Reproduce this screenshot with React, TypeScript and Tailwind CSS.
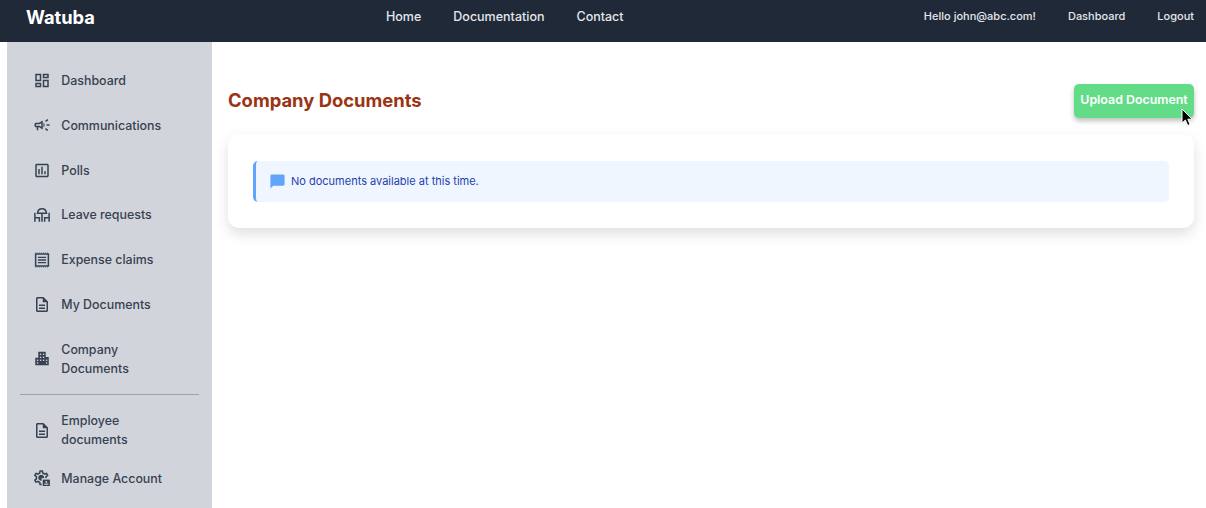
import React from "react";
import { MdOutlineDashboard, MdOutlineCampaign, MdOutlinePoll, MdOutlineDescription, MdChatBubble } from "react-icons/md";

const DeckIcon = () => (
  <svg viewBox="0 0 24 24" width="20" height="20" fill="none" stroke="currentColor" strokeWidth="2">
    <path d="M6 9.500c.3-3.600 2.800-6 6-6s5.700 2.400 6 6z" />
    <path d="M12 9.500V21" />
    <path d="M2.500 9V21M2.500 15.500H8.500V21" />
    <path d="M21.500 9V21M21.500 15.500H15.500V21" />
  </svg>
);

const ReceiptIcon = () => (
  <svg viewBox="0 0 24 24" width="20" height="20" fill="none" stroke="currentColor">
    <path d="M3 2.700h18M3 21.300h18" strokeWidth="1" strokeDasharray="1.300 1.300" />
    <rect x="3.500" y="4" width="17" height="16" strokeWidth="2" />
    <path d="M6.500 8.500h11M6.500 12h11M6.500 15.500h11" strokeWidth="1.800" />
  </svg>
);

const CompanyIcon = () => (
  <svg viewBox="0 0 24 24" width="21" height="21">
    <path d="M7 3h10v7h4v11H3V11h4z" fill="currentColor" />
    <g fill="#d1d5db">
      <rect x="9.200" y="5.500" width="1.800" height="1.800" /><rect x="13.200" y="5.500" width="1.800" height="1.800" />
      <rect x="9.200" y="9.500" width="1.800" height="1.800" /><rect x="13.200" y="9.500" width="1.800" height="1.800" />
      <rect x="5.200" y="13.500" width="1.800" height="1.800" /><rect x="9.200" y="13.500" width="1.800" height="1.800" /><rect x="13.200" y="13.500" width="1.800" height="1.800" /><rect x="17.200" y="13.500" width="1.800" height="1.800" />
      <rect x="5.200" y="17" width="1.800" height="1.800" /><rect x="17.200" y="17" width="1.800" height="1.800" />
    </g>
  </svg>
);

const GEAR = "M19.43 12.98c.04-.32.07-.64.07-.98 0-.34-.03-.66-.07-.98l2.11-1.65c.19-.15.24-.42.12-.64l-2-3.46c-.09-.16-.26-.25-.44-.25-.06 0-.12.01-.17.03l-2.49 1c-.52-.4-1.08-.73-1.69-.98l-.38-2.65C14.46 2.18 14.25 2 14 2h-4c-.25 0-.46.18-.49.42l-.38 2.65c-.61.25-1.17.59-1.69.98l-2.49-1c-.06-.02-.12-.03-.18-.03-.17 0-.34.09-.43.25l-2 3.46c-.13.22-.07.49.12.64l2.11 1.65c-.04.32-.07.65-.07.98 0 .33.03.66.07.98l-2.11 1.65c-.19.15-.24.42-.12.64l2 3.46c.09.16.26.25.44.25.06 0 .12-.01.17-.03l2.49-1c.52.4 1.08.73 1.69.98l.38 2.65c.03.24.24.42.49.42h4c.25 0 .46-.18.49-.42l.38-2.65c.61-.25 1.17-.59 1.69-.98l2.49 1c.06.02.12.03.18.03.17 0 .34-.09.43-.25l2-3.46c.12-.22.07-.49-.12-.64l-2.11-1.65zm-1.98-1.71c.04.31.05.52.05.73 0 .21-.02.43-.05.73l-.14 1.13.89.7 1.08.84-.7 1.21-1.27-.51-1.04-.42-.9.68c-.43.32-.84.56-1.25.73l-1.06.43-.16 1.13-.2 1.35h-1.4l-.19-1.35-.16-1.13-1.06-.43c-.43-.18-.83-.41-1.23-.71l-.91-.7-1.06.43-1.27.51-.7-1.21 1.08-.84.89-.7-.14-1.13c-.03-.31-.05-.54-.05-.74s.02-.43.05-.73l.14-1.13-.89-.7-1.08-.84.7-1.21 1.27.51 1.04.42.9-.68c.43-.32.84-.56 1.25-.73l1.06-.43.16-1.13.2-1.35h1.39l.19 1.35.16 1.13 1.06.43c.43.18.83.41 1.23.71l.91.7 1.06-.43 1.27-.51.7 1.21-1.07.85-.89.7.14 1.13zM12 8c-2.21 0-4 1.790-4 4s1.790 4 4 4 4-1.790 4-4-1.790-4-4-4z";

const ManageIcon = () => (
  <svg viewBox="0 0 24 24" width="21" height="21">
    <path d={GEAR} fill="currentColor" transform="translate(-1 -1)" />
    <rect x="11.500" y="11.500" width="12.500" height="12.500" fill="#d1d5db" />
    <path d="M13 13.500h9.500v8.500H13z" fill="currentColor" />
    <circle cx="17.750" cy="16.500" r="1.300" fill="#d1d5db" />
    <rect x="15" y="18.800" width="5.500" height="1.600" fill="#d1d5db" />
  </svg>
);

const Row = ({ icon, label, cls }: { icon: React.ReactNode; label: React.ReactNode; cls: string }) => (
  <div className={`flex items-center pl-[26px] pr-4 ${cls}`}>
    <span className="w-[18px] h-[18px] flex items-center justify-center text-[19px] text-[#374151] shrink-0">{icon}</span>
    <span className="ml-[10.3px] text-[12.4px] leading-[19px] font-[450] text-[#374151]">{label}</span>
  </div>
);

export default function App() {
  return (
    <div className="h-[508px] overflow-hidden bg-white font-['Inter',sans-serif] relative">
      <header className="h-[42px] bg-[#1f2937] flex items-center relative">
        <div className="ml-[26px] mb-[7px] text-[18.3px] font-bold text-white">Watuba</div>
        <nav className="absolute left-[386px] top-[7px] flex gap-[32px] text-[12.5px] leading-[19px] font-medium text-[#e5e7eb]">
          <span>Home</span><span>Documentation</span><span>Contact</span>
        </nav>
        <div className="ml-auto mr-[12px] mb-[9px] flex gap-[32px] text-[11px] leading-[19px] font-medium text-[#e5e7eb]">
          <span>Hello john@abc.com!</span><span>Dashboard</span><span>Logout</span>
        </div>
      </header>
      <div className="flex h-[466px]">
        <aside className="ml-[7px] w-[205px] bg-[#d1d5db] pt-[16.3px] shrink-0">
          <Row cls="h-[44.75px]" icon={<MdOutlineDashboard />} label="Dashboard" />
          <Row cls="h-[44.75px]" icon={<MdOutlineCampaign className="text-[20px]" />} label="Communications" />
          <Row cls="h-[44.75px]" icon={<MdOutlinePoll />} label="Polls" />
          <Row cls="h-[44.75px]" icon={<DeckIcon />} label="Leave requests" />
          <Row cls="h-[44.75px]" icon={<ReceiptIcon />} label="Expense claims" />
          <Row cls="h-[44.75px]" icon={<MdOutlineDescription />} label="My Documents" />
          <Row cls="h-[63.7px]" icon={<CompanyIcon />} label={<>Company<br />Documents</>} />
          <div className="mx-[13px] mt-[4px] border-t border-[#9ca3af]" />
          <Row cls="h-[70px]" icon={<MdOutlineDescription />} label={<>Employee<br />documents</>} />
          <Row cls="h-[26px]" icon={<ManageIcon />} label="Manage Account" />
        </aside>
        <main className="flex-1 pl-[16px] pr-[12px]">
          <div className="flex items-center justify-between pt-[42px]">
            <h1 className="text-[18.4px] leading-[32px] pb-[2px] font-bold text-[#9a3412]">Company Documents</h1>
            <button className="h-[34px] w-[120px] pb-[2px] rounded-[5px] bg-[#63dc87] text-white text-[12.4px] font-semibold shadow-[0_3px_5px_rgba(0,0,0,0.25)]">Upload Document</button>
          </div>
          <div className="mt-[16px] rounded-[11px] bg-white shadow-[0_6px_14px_rgba(0,0,0,0.13)] pt-[27px] pb-[26px] px-[25px]">
            <div className="h-[41px] rounded-[5px] bg-[#eff6ff] border-l-[3px] border-[#60a5fa] flex items-center pl-[13px]">
              <MdChatBubble className="text-[#60a5fa] text-[17px]" />
              <span className="ml-[5px] text-[11px] text-[#1e40af]">No documents available at this time.</span>
            </div>
          </div>
        </main>
      </div>
      <svg className="absolute left-[1180px] top-[108px]" width="13" height="20" viewBox="0 0 13 20">
        <path d="M2 1v14l3.400-3 2.300 5.500 2.400-1-2.300-5.300h4.400z" fill="#000" stroke="#fff" strokeWidth="1" />
      </svg>
    </div>
  );
}
